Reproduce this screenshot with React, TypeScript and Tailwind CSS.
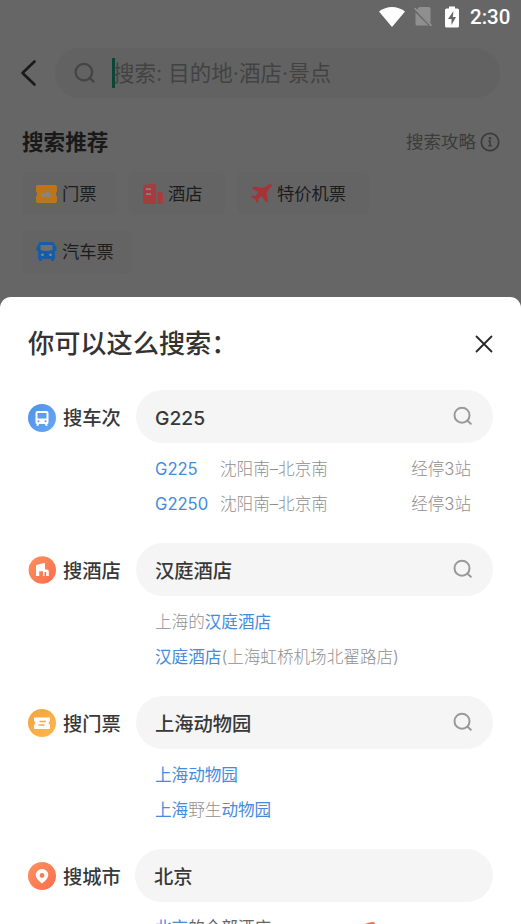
import React from 'react';

type Part = { text: string; hit?: boolean };

const trains = [
    { code: 'G225', route: '沈阳南–北京南', stops: '经停3站' },
    { code: 'G2250', route: '沈阳南–北京南', stops: '经停3站' },
];

const hotelResults: Part[][] = [
    [{ text: '上海的' }, { text: '汉庭酒店', hit: true }],
    [{ text: '汉庭酒店', hit: true }, { text: '(上海虹桥机场北翟路店)' }],
];

const ticketResults: Part[][] = [
    [{ text: '上海动物园', hit: true }],
    [{ text: '上海', hit: true }, { text: '野生' }, { text: '动物园', hit: true }],
];

function SearchIcon({ className }: { className: string }) {
    return (
        <svg viewBox="0 0 20 20" className={className} fill="none" stroke="currentColor" strokeWidth="2" strokeLinecap="round">
            <circle cx="9" cy="9.2" r="7.5" />
            <path d="M14.600 14.800l3.200 3" />
        </svg>
    );
}

function StatusBar() {
    return (
        <div className="flex h-[34px] items-center justify-end pr-[11px] text-white">
            <svg viewBox="0 0 26 20" className="h-5 w-[26px]" fill="currentColor">
                <path d="M0 4.5C7.500-1.500 18.500-1.500 26 4.500L13 20z" />
            </svg>
            <svg viewBox="0 0 20 22" className="ml-2 h-[22px] w-5">
                <path d="M6.500 1H16q1.500 0 1.500 1.500V18q0 1.500-1.500 1.500H4Q2.500 19.500 2.500 18V5z" fill="#8f8f8f" />
                <path d="M0.500 2.500l18 18" stroke="#666" strokeWidth="3" />
                <path d="M1.500 2l17 17.800" stroke="#929292" strokeWidth="1.700" />
            </svg>
            <svg viewBox="0 0 14 22" className="ml-3 h-[22px] w-[14px]">
                <path d="M4 0.500h6v2h2.500Q14 2.500 14 4v16q0 1.500-1.500 1.500h-11Q0 21.500 0 20V4q0-1.500 1.500-1.500H4z" fill="currentColor" />
                <path d="M8.500 5L3 13h3.500v6L11 11H7.800z" fill="#666" />
            </svg>
            <span className="ml-[11px] w-10 font-['Roboto'] text-[20.500px] font-medium leading-none">2:30</span>
        </div>
    );
}

function Chip({ label, className, children }: { label: string; className: string; children: React.ReactNode }) {
    return (
        <div className={`flex h-[43px] items-center rounded-md bg-[#646464] pl-[14px] text-[17.3px] text-[#1c1c1c] ${className}`}>
            {children}
            <span className="ml-[5px] whitespace-nowrap">{label}</span>
        </div>
    );
}

function Backdrop() {
    return (
        <div className="h-[297px]">
            <StatusBar />
            <div className="flex items-center pt-[14px] pl-5">
                <svg viewBox="0 0 18 28" className="h-7 w-[18px]" fill="none" stroke="#1a1a1a" strokeWidth="2.600" strokeLinecap="round" strokeLinejoin="round">
                    <path d="M14.500 2.500L2.500 14l12 11.500" />
                </svg>
                <div className="ml-[17px] flex h-[50px] w-[445px] items-center rounded-full bg-[#626262] pl-[19px]">
                    <SearchIcon className="h-[22px] w-[22px] text-[#444]" />
                    <span className="ml-4 h-[30px] w-[3px] bg-[#08463a]" />
                    <span className="-ml-[2px] whitespace-nowrap pt-px text-[21.500px] text-[#424242]">搜索: 目的地·酒店·景点</span>
                </div>
            </div>
            <div className="flex h-[74px] items-center justify-between pt-[14px] pr-[21px] pl-[22px]">
                <h1 className="text-[21.600px] font-bold text-[#191919]">搜索推荐</h1>
                <div className="flex items-center gap-1 text-[#3b3b3b]">
                    <span className="text-[17.500px]">搜索攻略</span>
                    <svg viewBox="0 0 20 20" className="h-5 w-5" fill="none" stroke="currentColor">
                        <circle cx="10" cy="10" r="8.700" strokeWidth="1.700" />
                        <circle cx="10" cy="6.200" r="1.300" fill="currentColor" stroke="none" />
                        <path d="M8.300 9H10v4.600M8.300 13.800h3.500" strokeWidth="1.500" />
                    </svg>
                </div>
            </div>
            <div className="flex flex-wrap gap-x-3 gap-y-[15px] pr-20 pl-[22px]">
                <Chip label="门票" className="w-[94px]">
                    <svg viewBox="0 0 21 20" className="h-5 w-[21px]">
                        <path d="M2 1h17q2 0 2 2v4q-2 3 0 6v4q0 2-2 2H2q-2 0-2-2v-4q2-3 0-6V3Q0 1 2 1z" fill="#bd751c" />
                        <path d="M5 13V10q2-2 4 0l3-4L15.500 13z" fill="#858585" />
                    </svg>
                </Chip>
                <Chip label="酒店" className="w-[97px]">
                    <svg viewBox="0 0 21 21" className="h-[21px] w-[21px]" fill="#a83b3e">
                        <path d="M1 4Q1 2 3 1.800L12 .5q2 0 2 2V21H3q-2 0-2-2zM15.500 9H18q3 0 3 3v7q0 2-2 2h-3.500z" />
                        <path d="M4 6.200h5M4 11.200h5" stroke="#858585" strokeWidth="1.800" />
                    </svg>
                </Chip>
                <Chip label="特价机票" className="w-[132px]">
                    <svg viewBox="0 0 21 21" className="h-[21px] w-[21px]" fill="#a63338">
                        <path d="M19 1q2.500-.5 1.500 2.300L15.500 9 17 18l-2 1.500L11 13l-4 3 .5 3-1.500 1-2-4-4-2 1-1.500 3.500.5L7.500 9 1 5.500l1.500-2L12 5z" />
                    </svg>
                </Chip>
                <Chip label="汽车票" className="w-[110px]">
                    <svg viewBox="0 0 21 21" className="h-[21px] w-[21px]">
                        <path d="M5 1h11q2.500 0 2.800 3L20.500 6v4H19v8h-1v2h-3v-2H6v2H3v-2H2v-8H.5V6L2.200 4Q2.500 1 5 1z" fill="#175da3" />
                        <path d="M4.500 4h12v5q-6 2-12 0z" fill="#707070" />
                        <circle cx="6.500" cy="13.800" r="1.300" fill="#8a8a8a" />
                        <circle cx="14.500" cy="13.800" r="1.300" fill="#8a8a8a" />
                    </svg>
                </Chip>
            </div>
        </div>
    );
}

function SearchRow({ label, value, icon, hideSearch, pill = 'ml-[15px]', children }: {
    label: string;
    value: string;
    icon: React.ReactNode;
    hideSearch?: boolean;
    pill?: string;
    children: React.ReactNode;
}) {
    return (
        <section className="h-[153px] pr-7 pl-7">
            <div className="flex h-[53px] items-center">
                {icon}
                <span className="ml-[7px] w-[58px] whitespace-nowrap pt-[3px] text-[19.300px] font-medium text-[#383838]">{label}</span>
                <div className={`flex h-[53px] flex-1 items-center justify-between rounded-full bg-[#f5f5f5] pr-5 pl-[19px] ${pill}`}>
                    <span className="pt-[3px] text-[19.300px] font-medium text-[#383838]">{value}</span>
                    {!hideSearch && <SearchIcon className="mb-px h-5 w-5 text-[#999]" />}
                </div>
            </div>
            <div className="pt-[9px] pl-[127px] text-[16.600px] leading-[35px] text-[#8f8f8f]">
                {children}
            </div>
        </section>
    );
}

function Results({ lines }: { lines: Part[][] }) {
    return (
        <>
            {lines.map((line, i) => (
                <p key={i} className="whitespace-nowrap font-light">
                    {line.map((part, j) => (
                        <span key={j} className={part.hit ? 'font-normal text-[#458bdd]' : ''}>{part.text}</span>
                    ))}
                </p>
            ))}
        </>
    );
}

const TrainIcon = (
    <svg viewBox="0 0 28 28" className="mt-[2px] h-7 w-7">
        <defs>
            <linearGradient id="train" x2="1" y2="1"><stop stopColor="#5091e5" /><stop offset="1" stopColor="#68a7f8" /></linearGradient>
        </defs>
        <circle cx="14" cy="14" r="14" fill="url(#train)" />
        <path d="M9.500 7h9q2 0 2 2v9.500q0 1.500-1.500 1.500l.8 1.800h-2.300L17 20h-6l-.5 1.800H8.200L9 20q-1.500 0-1.500-1.500V9q0-2 2-2z" fill="#fff" />
        <path d="M9.500 9h9v5.500h-9z" fill="#5d9cee" />
        <circle cx="10.500" cy="17.200" r="1" fill="#5d9cee" />
        <circle cx="17.500" cy="17.200" r="1" fill="#5d9cee" />
    </svg>
);

const HotelIcon = (
    <svg viewBox="0 0 28 28" className="h-7 w-7">
        <defs>
            <linearGradient id="hotel" x2="1" y2="1"><stop stopColor="#ff915e" /><stop offset="1" stopColor="#f96c4b" /></linearGradient>
        </defs>
        <circle cx="14.300" cy="14" r="13.700" fill="url(#hotel)" />
        <path d="M8 10q0-1 1-1.200l6-1.600h2V13.500H19q1.800.5 1.800 2V20h-2.600v-4H16.500V20H15v-4.800h-3.800V20H8z" fill="#fff" />
    </svg>
);

const TicketIcon = (
    <svg viewBox="0 0 28 28" className="h-7 w-7">
        <defs>
            <linearGradient id="ticket" x2="1" y2="1"><stop stopColor="#f3a33e" /><stop offset="1" stopColor="#ffb650" /></linearGradient>
        </defs>
        <circle cx="14" cy="14" r="14" fill="url(#ticket)" />
        <path d="M6 8.500h16v3.600q-3 1.900 0 3.800v4h-16v-4q3-1.900 0-3.800z" fill="#fff" />
        <path d="M11.500 12.500h6.500M10.500 16h6" stroke="#f8aa45" strokeWidth="1.300" />
    </svg>
);

const CityIcon = (
    <svg viewBox="0 0 28 28" className="h-7 w-7">
        <defs>
            <linearGradient id="city" x2="1" y2="1"><stop stopColor="#ff935f" /><stop offset="1" stopColor="#fa6c4c" /></linearGradient>
        </defs>
        <circle cx="14" cy="14" r="14" fill="url(#city)" />
        <path d="M14 21.500q-6.300-4.800-6.300-8.300a6.300 6.300 0 0 1 12.600 0q0 3.500-6.300 8.300z" fill="#fff" />
        <circle cx="14" cy="13.500" r="2.400" fill="#fc7c55" />
    </svg>
);

export default function App() {
    return (
        <main className="h-[924px] w-[521px] overflow-hidden bg-[#666] font-['Inter','Noto_Sans_CJK_SC',sans-serif]">
            <Backdrop />
            <div className="h-[627px] overflow-hidden rounded-t-[11px] bg-white">
                <div className="flex h-[93px] items-center justify-between pr-7 pl-7">
                    <h2 className="pb-[2px] font-['Noto_Sans_CJK_SC',sans-serif] text-[26.200px] font-medium text-[#333]">你可以这么搜索：</h2>
                    <svg viewBox="0 0 18 18" className="h-[18px] w-[18px]" fill="none" stroke="#292929" strokeWidth="1.800" strokeLinecap="round">
                        <path d="M1.500 1.500l15 15M16.500 1.500l-15 15" />
                    </svg>
                </div>
                <SearchRow label="搜车次" value="G225" icon={TrainIcon}>
                    {trains.map((train) => (
                        <div key={train.code} className="flex pr-[22px] font-light">
                            <span className="w-[65px] font-normal text-[#458bdd]">{train.code}</span>
                            <span className="flex-1">{train.route}</span>
                            <span>{train.stops}</span>
                        </div>
                    ))}
                </SearchRow>
                <SearchRow label="搜酒店" value="汉庭酒店" icon={HotelIcon}>
                    <Results lines={hotelResults} />
                </SearchRow>
                <SearchRow label="搜门票" value="上海动物园" icon={TicketIcon}>
                    <Results lines={ticketResults} />
                </SearchRow>
                <SearchRow label="搜城市" value="北京" icon={CityIcon} hideSearch pill="ml-[14px]">
                    <div className="flex items-start">
                        <p className="w-[207px] text-[#666]"><span className="text-[#458bdd]">北京</span>的全部酒店</p>
                        <svg viewBox="0 0 14 14" className="mt-[11px] h-[14px] w-[14px]">
                            <path d="M0 4Q5 0 12 0l1 2-4 12z" fill="#ef7048" />
                        </svg>
                    </div>
                </SearchRow>
            </div>
        </main>
    );
}
